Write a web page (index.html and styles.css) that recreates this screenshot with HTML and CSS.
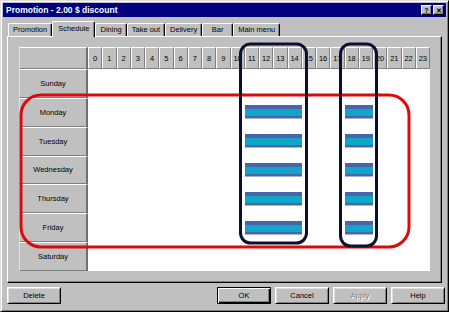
FILE: index.html
```html
<!DOCTYPE html>
<html lang="en">
<head>
    <meta charset="UTF-8">
    <title>Promotion - 2.00 $ discount</title>
    <link rel="stylesheet" href="styles.css">
</head>
<body>
    <div class="window">
        <div class="titlebar">
            <span class="title">Promotion - 2.00 $ discount</span>
            <span class="tb-buttons">
                <span class="tb-btn">?</span>
                <span class="tb-btn">&#x2715;</span>
            </span>
        </div>

        <div class="tabs">
            <div class="tab">Promotion</div>
            <div class="tab active">Schedule</div>
            <div class="tab">Dining</div>
            <div class="tab">Take out</div>
            <div class="tab">Delivery</div>
            <div class="tab">Bar</div>
            <div class="tab">Main menu</div>
        </div>

        <div class="panel">
            <div class="schedule">
                <div class="corner"></div>
                <div class="hours">
                    <div class="hour">0</div><div class="hour">1</div><div class="hour">2</div><div class="hour">3</div>
                    <div class="hour">4</div><div class="hour">5</div><div class="hour">6</div><div class="hour">7</div>
                    <div class="hour">8</div><div class="hour">9</div><div class="hour">10</div><div class="hour">11</div>
                    <div class="hour">12</div><div class="hour">13</div><div class="hour">14</div><div class="hour">15</div>
                    <div class="hour">16</div><div class="hour">17</div><div class="hour">18</div><div class="hour">19</div>
                    <div class="hour">20</div><div class="hour">21</div><div class="hour">22</div><div class="hour">23</div>
                </div>

                <div class="day">Sunday</div>
                <div class="slots"></div>

                <div class="day">Monday</div>
                <div class="slots"><div class="bar lunch"></div><div class="bar evening"></div></div>

                <div class="day">Tuesday</div>
                <div class="slots"><div class="bar lunch"></div><div class="bar evening"></div></div>

                <div class="day">Wednesday</div>
                <div class="slots"><div class="bar lunch"></div><div class="bar evening"></div></div>

                <div class="day">Thursday</div>
                <div class="slots"><div class="bar lunch"></div><div class="bar evening"></div></div>

                <div class="day">Friday</div>
                <div class="slots"><div class="bar lunch"></div><div class="bar evening"></div></div>

                <div class="day">Saturday</div>
                <div class="slots"></div>
            </div>
        </div>

        <div class="footer">
            <button class="btn">Delete</button>
            <span class="spacer"></span>
            <button class="btn default">OK</button>
            <button class="btn">Cancel</button>
            <button class="btn disabled">Apply</button>
            <button class="btn">Help</button>
        </div>

        <!-- hand drawn highlight marks over the grid -->
        <svg class="marks" width="449" height="312" viewBox="0 0 449 312">
            <rect x="21" y="95" width="388" height="152" rx="20" fill="none" stroke="#dc0a0a" stroke-width="3"/>
            <rect x="240.5" y="44" width="66" height="199" rx="10" fill="none" stroke="#0b1030" stroke-width="3"/>
            <rect x="340.5" y="44" width="36" height="202" rx="10" fill="none" stroke="#0b1030" stroke-width="3"/>
        </svg>
    </div>
</body>
</html>
```

FILE: styles.css
```css
body {
    margin: 0;
    font-family: "Liberation Sans", Arial, sans-serif;
    font-size: 7.5px;
    background-color: #fff;
}

.window {
    position: relative;
    width: 449px;
    height: 312px;
    box-sizing: border-box;
    background-color: #c0c0c0;
    border: 1px solid;
    border-color: #dfdfdf #000 #000 #dfdfdf;
    box-shadow: inset 1px 1px #fff, inset -1px -1px #808080;
    padding: 2px;
    display: flex;
    flex-direction: column;
}

.titlebar {
    height: 14px;
    background-color: #000080;
    color: #fff;
    display: flex;
    align-items: center;
    justify-content: space-between;
    padding: 0 2px 0 3px;
}

.title {
    font-weight: bold;
    font-size: 8.5px;
}

.tb-buttons {
    display: flex;
    gap: 1px;
}

.tb-btn {
    width: 11px;
    height: 10px;
    box-sizing: border-box;
    background-color: #c0c0c0;
    color: #000;
    border: 1px solid;
    border-color: #fff #000 #000 #fff;
    box-shadow: inset -1px -1px #808080;
    font-weight: bold;
    font-size: 7px;
    display: flex;
    align-items: center;
    justify-content: center;
    line-height: 1;
}

.tabs {
    display: flex;
    align-items: flex-end;
    height: 15px;
    margin-top: 4px;
    padding-left: 5px;
    position: relative;
    z-index: 1;
}

.tab {
    height: 13px;
    min-width: 31px;
    box-sizing: border-box;
    padding: 0 4px 1px;
    border: 1px solid;
    border-color: #fff #000 transparent #fff;
    border-bottom: none;
    box-shadow: inset -1px 0 #808080;
    border-radius: 2px 2px 0 0;
    display: flex;
    align-items: center;
    justify-content: center;
}

.tab.active {
    height: 16px;
    padding: 0 5px 2px;
    margin-bottom: -1px;
    background-color: #c0c0c0;
}

.panel {
    height: 247px;
    margin: 0 4px;
    box-sizing: border-box;
    border: 1px solid;
    border-color: #fff #000 #000 #fff;
    box-shadow: inset -1px -1px #808080;
    padding: 10px 11px 0 11px;
}

.schedule {
    width: 411px;
    height: 224px;
    display: grid;
    grid-template-columns: 69px 1fr;
    grid-template-rows: 22px repeat(7, 1fr);
}

.corner,
.day {
    box-sizing: border-box;
    border: 1px solid;
    border-color: #fff #808080 #808080 #dfdfdf;
    border-right: 2px solid #707070;
    display: flex;
    align-items: center;
    justify-content: center;
}

.hours {
    display: grid;
    grid-template-columns: repeat(24, 1fr);
}

.hour {
    box-sizing: border-box;
    border: 1px solid;
    border-color: #fff #808080 #808080 #fff;
    display: flex;
    align-items: center;
    justify-content: center;
}

.slots {
    display: grid;
    grid-template-columns: repeat(24, 1fr);
    align-items: center;
    background-color: #fff;
}

.bar {
    height: 14px;
    background: linear-gradient(#4a64ac 0 4px, #10a6c8 4px 11px, #4a64ac 11px 13px, #aab2dc 13px 14px);
}

.bar.lunch {
    grid-column: 12 / 16;
}

.bar.evening {
    grid-column: 19 / 21;
}

.footer {
    display: flex;
    gap: 4px;
    margin-top: 4px;
    padding: 0 1px 0 4px;
}

.spacer {
    flex: 1;
}

.btn {
    width: 54px;
    height: 17px;
    box-sizing: border-box;
    padding: 0;
    font: inherit;
    color: #000;
    background-color: #c0c0c0;
    border: 1px solid;
    border-color: #fff #000 #000 #fff;
    box-shadow: inset 1px 1px #dfdfdf, inset -1px -1px #808080;
}

.btn.default {
    border-color: #000;
    box-shadow: inset 1px 1px #fff, inset -1px -1px #000, inset -2px -2px #808080;
}

.btn.disabled {
    color: #808080;
    text-shadow: 1px 1px #fff;
}

.marks {
    position: absolute;
    left: -1px;
    top: -1px;
    pointer-events: none;
}
```
